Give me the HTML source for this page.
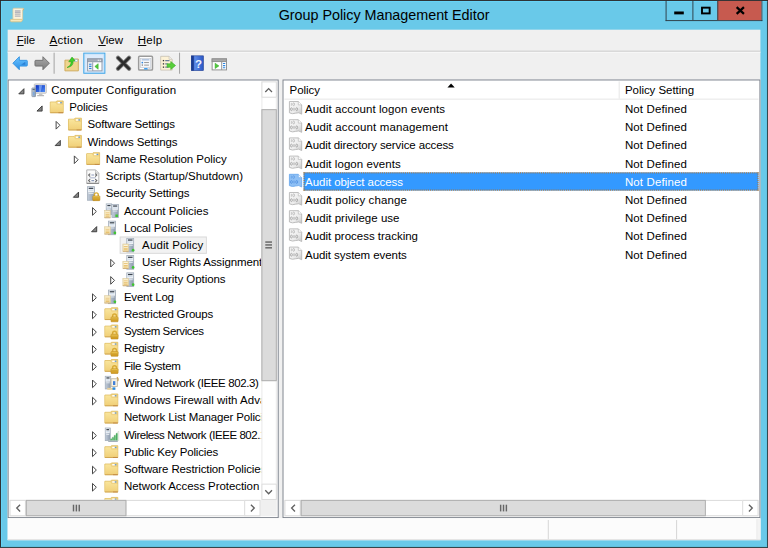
<!DOCTYPE html>
<html><head><meta charset="utf-8"><title>Group Policy Management Editor</title>
<style>
html,body{margin:0;padding:0;background:#6ac9e9;overflow:hidden;}
body{width:768px;height:548px;position:relative;font-family:"Liberation Sans", sans-serif;}
#w{position:absolute;left:0;top:0;width:802px;height:572px;transform-origin:0 0;transform:scale(0.9577,0.9577);}
.t{position:absolute;white-space:nowrap;line-height:16px;font-family:"Liberation Sans", sans-serif;}
svg{position:absolute;overflow:visible;}
u{text-decoration:underline;text-underline-offset:1px;}
</style></head><body><div id="w">
<svg width="0" height="0" style="position:absolute"><defs>
<linearGradient id="gf" x1="0" y1="0" x2="0" y2="1"><stop offset="0" stop-color="#f9e59c"/><stop offset="1" stop-color="#f1d079"/></linearGradient>
<linearGradient id="gt" x1="0" y1="0" x2="1" y2="0"><stop offset="0" stop-color="#c4cedb"/><stop offset="1" stop-color="#8d9bad"/></linearGradient>
<linearGradient id="gb" x1="0" y1="0" x2="1" y2="1"><stop offset="0" stop-color="#0a2fc0"/><stop offset="1" stop-color="#4f8df5"/></linearGradient>
<linearGradient id="gh" x1="0" y1="0" x2="1" y2="0"><stop offset="0" stop-color="#1d3f9c"/><stop offset="0.3" stop-color="#5c8ae8"/><stop offset="1" stop-color="#2a56c4"/></linearGradient>
<linearGradient id="gl" x1="0" y1="0" x2="0" y2="1"><stop offset="0" stop-color="#f3cf5c"/><stop offset="1" stop-color="#d29a1c"/></linearGradient>
<linearGradient id="gba" x1="0" y1="0" x2="0" y2="1"><stop offset="0" stop-color="#6cc4ff"/><stop offset="1" stop-color="#2b8fe6"/></linearGradient>
<linearGradient id="gga" x1="0" y1="0" x2="0" y2="1"><stop offset="0" stop-color="#a9a9a9"/><stop offset="1" stop-color="#7d7d7d"/></linearGradient>
<linearGradient id="gpol" x1="0" y1="0" x2="1" y2="1"><stop offset="0" stop-color="#fafafa"/><stop offset="0.6" stop-color="#ececec"/><stop offset="1" stop-color="#c4c4c4"/></linearGradient>
</defs></svg>
<div style="position:absolute;left:0px;top:0px;width:802px;height:572px;background:#69c9e9;box-sizing:border-box;border:1px solid #2b2625;"></div>
<div style="position:absolute;left:1px;top:1px;width:800px;height:570px;box-sizing:border-box;border:1px solid #66d4f8;border-right-color:#62c3e3;border-bottom-color:#62c3e3;"></div>
<svg style="left:10px;top:7.6px" width="16" height="16" viewBox="0 0 16 16"><path d="M3.500 1.500 Q3.500 0.600 4.600 0.600 H14 Q15.200 0.600 14.600 2 L13.600 3.200 V12.500 H3.500 Z" fill="#fbf3dc" stroke="#d9c9a0" stroke-width="0.800"/>
<path d="M5.500 3.300 H11.500 M5.500 5 H11.500 M5.500 6.700 H11.500 M5.500 8.800 H11.500" stroke="#b4b4bc" stroke-width="1.300"/>
<path d="M13.800 0.800 Q15.400 0.800 14.700 2.200 L13.700 3.400 Z" fill="#c9a468"/>
<path d="M0.800 13.300 Q0.800 12.200 2 12.200 H12.500 Q13.500 12.200 13.200 13.400 Q12.800 14.800 11.500 14.800 H2 Q0.800 14.800 0.800 13.300 Z" fill="#f7e7bb" stroke="#d9bf80" stroke-width="0.800"/></svg>
<div class="t" style="left:0px;top:8.00px;font-size:15px;color:#000;width:802px;text-align:center;letter-spacing:-0.03px;">Group Policy Management Editor</div>
<div style="position:absolute;left:695px;top:1px;width:101px;height:21px;box-sizing:border-box;border:1px solid #2f3e46;border-top:none;"></div>
<div style="position:absolute;left:723px;top:1px;width:1px;height:20px;background:#2f3e46;"></div>
<div style="position:absolute;left:749px;top:1px;width:46px;height:20px;background:#c75a4f;"></div>
<div style="position:absolute;left:749px;top:1px;width:1px;height:20px;background:#2f3e46;"></div>
<div style="position:absolute;left:704px;top:12px;width:10px;height:3px;background:#000;"></div>
<div style="position:absolute;left:732px;top:7px;width:10px;height:8px;box-sizing:border-box;border:2px solid #000;"></div>
<svg style="left:767.5px;top:7px" width="10" height="8" viewBox="0 0 10 8"><path d="M1.2 0.500 L8.800 7.500 M8.800 0.500 L1.200 7.500" stroke="#000" stroke-width="2.300"/></svg>
<div style="position:absolute;left:8px;top:31px;width:786px;height:533px;background:#f0f0f0;"></div>
<div class="t" style="left:17.368528766837212px;top:33.84px;font-size:12px;color:#000;letter-spacing:0.011px;"><u>F</u>ile</div>
<div class="t" style="left:51.72166649263861px;top:33.84px;font-size:12px;color:#000;letter-spacing:0.282px;"><u>A</u>ction</div>
<div class="t" style="left:102.57266367338416px;top:33.84px;font-size:12px;color:#000;letter-spacing:0.042px;"><u>V</u>iew</div>
<div class="t" style="left:143.9217291427378px;top:33.84px;font-size:12px;color:#000;letter-spacing:0.202px;"><u>H</u>elp</div>
<div style="position:absolute;left:8px;top:53px;width:786px;height:1px;background:#bcbcbc;"></div>
<div style="position:absolute;left:8px;top:54px;width:786px;height:1px;background:#fbfbfb;"></div>
<svg style="left:13px;top:58.1px" width="16" height="16" viewBox="0 0 16 16"><path d="M0.400 8 L7.200 1.200 V5 H14.700 Q15.500 5 15.500 5.800 V10.200 Q15.500 11 14.700 11 H7.200 V14.800 Z" fill="url(#gba)" stroke="#2f8fe0" stroke-width="0.9" stroke-linejoin="round"/>
<path d="M9 9.500 L13.500 6.500 V9.500 Z" fill="#1f6fc8" opacity=".7"/></svg>
<svg style="left:36px;top:58.1px" width="16" height="16" viewBox="0 0 16 16"><path d="M15.600 8 L8.800 1.200 V5 H1.300 Q0.500 5 0.500 5.800 V10.200 Q0.500 11 1.300 11 H8.800 V14.800 Z" fill="url(#gga)" stroke="#6a6a6a" stroke-width="0.9" stroke-linejoin="round"/></svg>
<div style="position:absolute;left:56px;top:55px;width:1px;height:22px;background:#a0a0a0;"></div>
<svg style="left:67.3px;top:58.6px" width="16" height="16" viewBox="0 0 16 16"><path d="M0.800 3.800 H6.500 L8 2.600 H14.800 V15 H0.800 Z" fill="#efd58f" stroke="#cda552" stroke-width="0.9"/>
<rect x="10.500" y="3.300" width="3.400" height="1.800" fill="#fff" stroke="#8aa8d8" stroke-width="0.5"/>
<path d="M3 11.500 Q7.500 9.500 7.200 5.200 L4.800 5.600 L8.200 0.600 L11.400 4.500 L9.300 4.800 Q10 10.500 3 11.500 Z" fill="#3fd02a" stroke="#27a318" stroke-width="0.6"/></svg>
<div style="position:absolute;left:87px;top:55px;width:23px;height:22px;box-sizing:border-box;border:1px solid #3da5e6;background:#dcebfc;box-shadow:inset 0 0 0 1px #bfe0fa;"></div>
<svg style="left:91px;top:58.5px" width="16" height="16" viewBox="0 0 16 16"><rect x="0.500" y="2.500" width="15" height="12.500" fill="#fff" stroke="#8e98a8" stroke-width="1"/>
<rect x="0.500" y="2.500" width="15" height="3" fill="#a7aeba" stroke="#8e98a8" stroke-width="1"/>
<rect x="11" y="3.300" width="1.500" height="1.300" fill="#e8eaee"/><rect x="13" y="3.300" width="1.500" height="1.300" fill="#e8eaee"/>
<rect x="1" y="6" width="4.500" height="8.500" fill="#e6e9ee"/><path d="M5.800 6 V15" stroke="#8e98a8" stroke-width="1"/>
<path d="M2 8 H4.500 M2 10.300 H4.500 M2 12.600 H4.500" stroke="#2f86e0" stroke-width="1.100"/>
<path d="M11.500 7.500 V13.300 L8 10.400 Z" fill="#4fc93a" stroke="#2fa21f" stroke-width="0.5"/></svg>
<svg style="left:121px;top:57.800000000000004px" width="16" height="16" viewBox="0 0 16 16"><path d="M2.200 2.200 L13.800 13.800 M13.800 2.200 L2.200 13.800" stroke="#7c7c7c" stroke-width="4.400" stroke-linecap="round"/>
<path d="M2.400 2.400 L13.600 13.600 M13.600 2.400 L2.400 13.600" stroke="#2d2d2d" stroke-width="2.700" stroke-linecap="round"/></svg>
<svg style="left:144px;top:57.6px" width="16" height="16" viewBox="0 0 16 16"><rect x="0.800" y="0.800" width="14.400" height="14.400" rx="1" fill="#fff" stroke="#9b9b9b" stroke-width="1.600"/>
<rect x="2.600" y="3" width="10.800" height="9.500" fill="#f6f8fb" stroke="#c2c8d2" stroke-width="0.700"/>
<path d="M4 4.500 H12" stroke="#9db4d6" stroke-width="1.200"/>
<circle cx="4.600" cy="7.300" r="0.900" fill="#2f86e0"/><circle cx="4.600" cy="10" r="0.800" fill="#8a8a8a"/>
<path d="M6.500 7.300 H11.500 M6.500 10 H11.500" stroke="#8a8a8a" stroke-width="0.900"/>
<rect x="6.500" y="13" width="3.600" height="1.600" fill="#3fa0f0"/><rect x="11" y="13" width="2.400" height="1.600" fill="#cfd4dc"/></svg>
<svg style="left:167px;top:57.6px" width="16" height="16" viewBox="0 0 16 16"><path d="M0.800 0.800 H9.500 L12.800 4 V15.200 H0.800 Z" fill="#fdf2d6" stroke="#c9c3b4" stroke-width="0.900"/>
<path d="M9.500 0.800 V4 H12.800" fill="#eee" stroke="#c9c3b4" stroke-width="0.700"/>
<g fill="#333"><rect x="3" y="4.600" width="1.400" height="1.400"/><rect x="3" y="8" width="1.400" height="1.400"/><rect x="3" y="11.400" width="1.400" height="1.400"/></g>
<path d="M5.500 5.300 H10 M5.500 8.700 H8 M5.500 12.100 H9" stroke="#6f7f9a" stroke-width="1.100"/>
<path d="M7.500 8.600 H11.300 V6.200 L16.300 10.400 L11.300 14.600 V12.200 H7.500 Z" fill="#58cf3a" stroke="#37a81f" stroke-width="0.600"/></svg>
<div style="position:absolute;left:187px;top:55px;width:1px;height:22px;background:#a0a0a0;"></div>
<svg style="left:198px;top:57.6px" width="16" height="16" viewBox="0 0 16 16"><rect x="1.800" y="0.300" width="12.600" height="15.400" fill="url(#gh)" stroke="#1b3a8e" stroke-width="0.600"/><rect x="1.800" y="0.300" width="2.600" height="15.400" fill="#17358a" opacity=".8"/><text x="9.200" y="12.600" font-family="Liberation Sans, sans-serif" font-weight="bold" font-size="12" fill="#eef3ff" text-anchor="middle">?</text></svg>
<svg style="left:221px;top:57.800000000000004px" width="16" height="16" viewBox="0 0 16 16"><rect x="0.500" y="3.500" width="15" height="11.500" fill="#fff" stroke="#8f8f8f" stroke-width="1"/>
<rect x="0.500" y="3.500" width="15" height="2.800" fill="#a9a9a9" stroke="#8f8f8f" stroke-width="1"/>
<path d="M10.500 6.500 V15" stroke="#8f8f8f" stroke-width="1"/>
<path d="M3.600 8 V13.600 L7.600 10.800 Z" fill="#4fc93a" stroke="#2fa21f" stroke-width="0.500"/>
<path d="M11.800 8.300 H14.200 M11.800 10.500 H14.200 M11.800 12.700 H14.200" stroke="#2f86e0" stroke-width="1.100"/></svg>
<div style="position:absolute;left:8px;top:83px;width:283px;height:458px;box-sizing:border-box;border:1px solid #787e88;background:#fff;"></div>
<div style="position:absolute;left:10px;top:85px;width:262.5px;height:437px;overflow:hidden;">
<svg style="left:8.7px;top:6.7px" width="7" height="7" viewBox="0 0 7 7"><path d="M6 0.600 V6 H0.600 Z" fill="#858585" stroke="#303030" stroke-width="0.9" stroke-linejoin="miter"/></svg>
<svg style="left:22.6px;top:1px" width="16" height="16" viewBox="0 0 16 16"><rect x="2.800" y="1.600" width="12.600" height="9.800" rx="0.800" fill="#e2e2e2" stroke="#b9b9b9" stroke-width="0.800"/>
<rect x="4.200" y="2.900" width="9.800" height="7.200" fill="url(#gb)"/>
<path d="M7.500 2.900 L11 2.900 L9.500 10.100 L8 10.100 Z" fill="#a9ccff" opacity=".55"/>
<path d="M8 11.600 H11 L11.500 13.300 H7.500 Z" fill="#c6c6c6"/><rect x="5.800" y="13.200" width="7.200" height="1.300" fill="#b8b8b8"/>
<rect x="0.300" y="5.900" width="3.800" height="9" rx="0.500" fill="url(#gt)" stroke="#8592a2" stroke-width="0.800"/>
<rect x="1" y="7" width="2.300" height="1" fill="#5a6775"/><rect x="1.300" y="10" width="1.700" height="3.800" fill="#6aa4e8" opacity=".7"/></svg>
<div class="t" style="left:43.4px;top:0.74px;font-size:12px;color:#000;letter-spacing:0.147px;">Computer Configuration</div>
<svg style="left:27.700000000000003px;top:24.7px" width="7" height="7" viewBox="0 0 7 7"><path d="M6 0.600 V6 H0.600 Z" fill="#858585" stroke="#303030" stroke-width="0.9" stroke-linejoin="miter"/></svg>
<svg style="left:41.6px;top:19px" width="16" height="16" viewBox="0 0 16 16"><path d="M0.500 2.500 H6.300 L7.300 1.400 H14 V13.600 H0.500 Z" fill="#efd283" stroke="#dfbe62" stroke-width="0.900"/>
<rect x="8.200" y="2.500" width="2.700" height="1.500" fill="#fff"/><rect x="10.900" y="2.600" width="1.600" height="1.300" fill="#5b9ae0"/>
<path d="M0.900 2.900 H5.900 L7.500 5.500 H13.600 V13.200 H0.900 Z" fill="url(#gf)"/>
<path d="M0.500 13.700 H14" stroke="#cfa24c" stroke-width="0.900"/>
<path d="M9 13.700 H14" stroke="#b9783a" stroke-width="0.900" opacity=".7"/></svg>
<div class="t" style="left:62.400000000000006px;top:18.74px;font-size:12px;color:#000;letter-spacing:-0.189px;">Policies</div>
<svg style="left:48.0px;top:41.2px" width="6" height="10" viewBox="0 0 6 10"><path d="M0.600 0.800 L4.600 4.800 L0.600 8.800 Z" fill="#fff" stroke="#404040" stroke-width="1"/></svg>
<svg style="left:60.599999999999994px;top:37px" width="16" height="16" viewBox="0 0 16 16"><path d="M0.500 2.500 H6.300 L7.300 1.400 H14 V13.600 H0.500 Z" fill="#efd283" stroke="#dfbe62" stroke-width="0.900"/>
<rect x="8.200" y="2.500" width="2.700" height="1.500" fill="#fff"/><rect x="10.900" y="2.600" width="1.600" height="1.300" fill="#5b9ae0"/>
<path d="M0.900 2.900 H5.900 L7.500 5.500 H13.600 V13.200 H0.900 Z" fill="url(#gf)"/>
<path d="M0.500 13.700 H14" stroke="#cfa24c" stroke-width="0.900"/>
<path d="M9 13.700 H14" stroke="#b9783a" stroke-width="0.900" opacity=".7"/></svg>
<div class="t" style="left:81.4px;top:36.74px;font-size:12px;color:#000;letter-spacing:-0.176px;">Software Settings</div>
<svg style="left:46.7px;top:60.7px" width="7" height="7" viewBox="0 0 7 7"><path d="M6 0.600 V6 H0.600 Z" fill="#858585" stroke="#303030" stroke-width="0.9" stroke-linejoin="miter"/></svg>
<svg style="left:60.599999999999994px;top:55px" width="16" height="16" viewBox="0 0 16 16"><path d="M0.500 2.500 H6.300 L7.300 1.400 H14 V13.600 H0.500 Z" fill="#efd283" stroke="#dfbe62" stroke-width="0.900"/>
<rect x="8.200" y="2.500" width="2.700" height="1.500" fill="#fff"/><rect x="10.900" y="2.600" width="1.600" height="1.300" fill="#5b9ae0"/>
<path d="M0.900 2.900 H5.900 L7.500 5.500 H13.600 V13.200 H0.900 Z" fill="url(#gf)"/>
<path d="M0.500 13.700 H14" stroke="#cfa24c" stroke-width="0.900"/>
<path d="M9 13.700 H14" stroke="#b9783a" stroke-width="0.900" opacity=".7"/></svg>
<div class="t" style="left:81.4px;top:54.74px;font-size:12px;color:#000;letter-spacing:-0.090px;">Windows Settings</div>
<svg style="left:67.0px;top:77.2px" width="6" height="10" viewBox="0 0 6 10"><path d="M0.600 0.800 L4.600 4.800 L0.600 8.800 Z" fill="#fff" stroke="#404040" stroke-width="1"/></svg>
<svg style="left:79.6px;top:73px" width="16" height="16" viewBox="0 0 16 16"><path d="M0.500 2.500 H6.300 L7.300 1.400 H14 V13.600 H0.500 Z" fill="#efd283" stroke="#dfbe62" stroke-width="0.900"/>
<rect x="8.200" y="2.500" width="2.700" height="1.500" fill="#fff"/><rect x="10.900" y="2.600" width="1.600" height="1.300" fill="#5b9ae0"/>
<path d="M0.900 2.900 H5.900 L7.500 5.500 H13.600 V13.200 H0.900 Z" fill="url(#gf)"/>
<path d="M0.500 13.700 H14" stroke="#cfa24c" stroke-width="0.900"/>
<path d="M9 13.700 H14" stroke="#b9783a" stroke-width="0.900" opacity=".7"/></svg>
<div class="t" style="left:100.4px;top:72.74px;font-size:12px;color:#000;letter-spacing:-0.047px;">Name Resolution Policy</div>
<svg style="left:79.6px;top:91px" width="16" height="16" viewBox="0 0 16 16"><path d="M0.600 1.400 H9.800 L13.200 4.800 V15.500 H0.600 Z" fill="#fbfbfb" stroke="#b0b0b0" stroke-width="1"/>
<path d="M0.600 15.500 H13.200" stroke="#8c8c8c" stroke-width="1.100"/>
<path d="M9.800 1.400 V4.800 H13.200" fill="#e6e6e6" stroke="#b0b0b0" stroke-width="0.800"/>
<path d="M4.200 5.300 L2.500 6.800 L4.200 8.300 M9.400 5.300 L11.100 6.800 L9.400 8.300 M4.200 11.100 L2.500 12.600 L4.200 14.100 M9.400 11.100 L11.100 12.600 L9.400 14.100" fill="none" stroke="#666" stroke-width="1.100"/>
<path d="M5.400 6.800 H8.300 M5.400 12.600 H8.300" stroke="#8e9aba" stroke-width="1.100"/>
<path d="M3.600 9.700 H10" stroke="#9aa4c0" stroke-width="0.900"/></svg>
<div class="t" style="left:100.4px;top:90.74px;font-size:12px;color:#000;letter-spacing:-0.003px;">Scripts (Startup/Shutdown)</div>
<svg style="left:65.7px;top:114.7px" width="7" height="7" viewBox="0 0 7 7"><path d="M6 0.600 V6 H0.600 Z" fill="#858585" stroke="#303030" stroke-width="0.9" stroke-linejoin="miter"/></svg>
<svg style="left:79.6px;top:109px" width="16" height="16" viewBox="0 0 16 16"><g transform="translate(1,0.5)"><rect x="0.4" y="0.4" width="7.2" height="14.2" fill="url(#gt)" stroke="#a3aebb" stroke-width="0.8"/>
<rect x="0.9" y="0.9" width="6.2" height="5.40" fill="#eef1f5"/>
<rect x="1.6" y="1.5" width="4.8" height="1.3" fill="#39434f"/>
<rect x="1.6" y="3.6" width="4.8" height="1.2" fill="#cfdcea"/>
<rect x="1.4" y="7.00" width="5.2" height="1.1" fill="#e4eaf1" opacity=".9"/></g><g transform="translate(6.6,6.8)"><path d="M2 4 V2.6 A2 2 0 0 1 6 2.600 V4" fill="none" stroke="#d9ab35" stroke-width="1.5"/>
<rect x="0.3" y="3.8" width="7.4" height="4.9" rx="0.6" fill="url(#gl)" stroke="#b9861a" stroke-width="0.6"/>
<path d="M1 5.6 H7 M1 7 H7" stroke="#b9861a" stroke-width="0.6" opacity=".7"/></g></svg>
<div class="t" style="left:100.4px;top:108.74px;font-size:12px;color:#000;letter-spacing:-0.167px;">Security Settings</div>
<svg style="left:86.0px;top:131.2px" width="6" height="10" viewBox="0 0 6 10"><path d="M0.600 0.800 L4.600 4.800 L0.600 8.800 Z" fill="#fff" stroke="#404040" stroke-width="1"/></svg>
<svg style="left:98.6px;top:127px" width="16" height="16" viewBox="0 0 16 16"><g transform="translate(1.5,0.5)"><rect x="0.4" y="0.4" width="5.7" height="11.2" fill="url(#gt)" stroke="#a3aebb" stroke-width="0.8"/>
<rect x="0.9" y="0.9" width="4.7" height="4.32" fill="#eef1f5"/>
<rect x="1.6" y="1.5" width="3.3" height="1.3" fill="#39434f"/>
<rect x="1.6" y="3.6" width="3.3" height="1.2" fill="#cfdcea"/>
<rect x="1.4" y="5.92" width="3.7" height="1.1" fill="#e4eaf1" opacity=".9"/></g><g transform="translate(7.5,1)"><rect x="0.4" y="0.4" width="6.7" height="13.7" fill="url(#gt)" stroke="#a3aebb" stroke-width="0.8"/>
<rect x="0.9" y="0.9" width="5.7" height="5.22" fill="#eef1f5"/>
<rect x="1.6" y="1.5" width="4.3" height="1.3" fill="#39434f"/>
<rect x="1.6" y="3.6" width="4.3" height="1.2" fill="#cfdcea"/>
<rect x="1.4" y="6.82" width="4.7" height="1.1" fill="#e4eaf1" opacity=".9"/></g><g transform="translate(0,7.5)"><rect x="0.3" y="0.3" width="6" height="7.6" fill="#f6e7b9" stroke="#d9c79a" stroke-width="0.6"/>
<path d="M1.3 1.900 H5.300 M1.300 3.700 H5.300" stroke="#fffdf3" stroke-width="0.9"/>
<path d="M1.300 2.800 H5.300 M1.300 4.700 H5.300 M1.300 6.300 H5.300" stroke="#e3b65c" stroke-width="0.8"/>
<path d="M0.300 7.900 H6.300" stroke="#c9a468" stroke-width="0.8"/></g><rect x="11.5" y="12" width="2.6" height="2.6" fill="#3fc431"/></svg>
<div class="t" style="left:119.4px;top:126.74px;font-size:12px;color:#000;letter-spacing:0.016px;">Account Policies</div>
<svg style="left:84.7px;top:150.7px" width="7" height="7" viewBox="0 0 7 7"><path d="M6 0.600 V6 H0.600 Z" fill="#858585" stroke="#303030" stroke-width="0.9" stroke-linejoin="miter"/></svg>
<svg style="left:98.6px;top:145px" width="16" height="16" viewBox="0 0 16 16"><g transform="translate(4,0.5)"><rect x="0.4" y="0.4" width="7.2" height="14.2" fill="url(#gt)" stroke="#a3aebb" stroke-width="0.8"/>
<rect x="0.9" y="0.9" width="6.2" height="5.40" fill="#eef1f5"/>
<rect x="1.6" y="1.5" width="4.8" height="1.3" fill="#39434f"/>
<rect x="1.6" y="3.6" width="4.8" height="1.2" fill="#cfdcea"/>
<rect x="1.4" y="7.00" width="5.2" height="1.1" fill="#e4eaf1" opacity=".9"/></g><g transform="translate(0,6.5)"><rect x="0.3" y="0.3" width="6" height="7.6" fill="#f6e7b9" stroke="#d9c79a" stroke-width="0.6"/>
<path d="M1.3 1.900 H5.300 M1.300 3.700 H5.300" stroke="#fffdf3" stroke-width="0.9"/>
<path d="M1.300 2.800 H5.300 M1.300 4.700 H5.300 M1.300 6.300 H5.300" stroke="#e3b65c" stroke-width="0.8"/>
<path d="M0.300 7.900 H6.300" stroke="#c9a468" stroke-width="0.8"/></g><circle cx="11" cy="13.2" r="1.4" fill="#3fc431"/></svg>
<div class="t" style="left:119.4px;top:144.74px;font-size:12px;color:#000;letter-spacing:-0.145px;">Local Policies</div>
<div style="position:absolute;left:115px;top:162px;width:91px;height:18px;box-sizing:border-box;border:1px solid #dadada;background:#f2f2f2;"></div>
<svg style="left:117.6px;top:163px" width="16" height="16" viewBox="0 0 16 16"><g transform="translate(4,0.5)"><rect x="0.4" y="0.4" width="7.2" height="14.2" fill="url(#gt)" stroke="#a3aebb" stroke-width="0.8"/>
<rect x="0.9" y="0.9" width="6.2" height="5.40" fill="#eef1f5"/>
<rect x="1.6" y="1.5" width="4.8" height="1.3" fill="#39434f"/>
<rect x="1.6" y="3.6" width="4.8" height="1.2" fill="#cfdcea"/>
<rect x="1.4" y="7.00" width="5.2" height="1.1" fill="#e4eaf1" opacity=".9"/></g><g transform="translate(0,6.5)"><rect x="0.3" y="0.3" width="6" height="7.6" fill="#f6e7b9" stroke="#d9c79a" stroke-width="0.6"/>
<path d="M1.3 1.900 H5.300 M1.300 3.700 H5.300" stroke="#fffdf3" stroke-width="0.9"/>
<path d="M1.300 2.800 H5.300 M1.300 4.700 H5.300 M1.300 6.300 H5.300" stroke="#e3b65c" stroke-width="0.8"/>
<path d="M0.300 7.900 H6.300" stroke="#c9a468" stroke-width="0.8"/></g><circle cx="11" cy="13.2" r="1.4" fill="#3fc431"/></svg>
<div class="t" style="left:138.4px;top:162.74px;font-size:12px;color:#000;letter-spacing:0.115px;">Audit Policy</div>
<svg style="left:105.0px;top:185.2px" width="6" height="10" viewBox="0 0 6 10"><path d="M0.600 0.800 L4.600 4.800 L0.600 8.800 Z" fill="#fff" stroke="#404040" stroke-width="1"/></svg>
<svg style="left:117.6px;top:181px" width="16" height="16" viewBox="0 0 16 16"><g transform="translate(4,0.5)"><rect x="0.4" y="0.4" width="7.2" height="14.2" fill="url(#gt)" stroke="#a3aebb" stroke-width="0.8"/>
<rect x="0.9" y="0.9" width="6.2" height="5.40" fill="#eef1f5"/>
<rect x="1.6" y="1.5" width="4.8" height="1.3" fill="#39434f"/>
<rect x="1.6" y="3.6" width="4.8" height="1.2" fill="#cfdcea"/>
<rect x="1.4" y="7.00" width="5.2" height="1.1" fill="#e4eaf1" opacity=".9"/></g><g transform="translate(0,6.5)"><rect x="0.3" y="0.3" width="6" height="7.6" fill="#f6e7b9" stroke="#d9c79a" stroke-width="0.6"/>
<path d="M1.3 1.900 H5.300 M1.300 3.700 H5.300" stroke="#fffdf3" stroke-width="0.9"/>
<path d="M1.300 2.800 H5.300 M1.300 4.700 H5.300 M1.300 6.300 H5.300" stroke="#e3b65c" stroke-width="0.8"/>
<path d="M0.300 7.900 H6.300" stroke="#c9a468" stroke-width="0.8"/></g><circle cx="11" cy="13.2" r="1.4" fill="#3fc431"/></svg>
<div class="t" style="left:138.4px;top:180.74px;font-size:12px;color:#000;letter-spacing:-0.131px;">User Rights Assignment</div>
<svg style="left:105.0px;top:203.2px" width="6" height="10" viewBox="0 0 6 10"><path d="M0.600 0.800 L4.600 4.800 L0.600 8.800 Z" fill="#fff" stroke="#404040" stroke-width="1"/></svg>
<svg style="left:117.6px;top:199px" width="16" height="16" viewBox="0 0 16 16"><g transform="translate(4,0.5)"><rect x="0.4" y="0.4" width="7.2" height="14.2" fill="url(#gt)" stroke="#a3aebb" stroke-width="0.8"/>
<rect x="0.9" y="0.9" width="6.2" height="5.40" fill="#eef1f5"/>
<rect x="1.6" y="1.5" width="4.8" height="1.3" fill="#39434f"/>
<rect x="1.6" y="3.6" width="4.8" height="1.2" fill="#cfdcea"/>
<rect x="1.4" y="7.00" width="5.2" height="1.1" fill="#e4eaf1" opacity=".9"/></g><g transform="translate(0,6.5)"><rect x="0.3" y="0.3" width="6" height="7.6" fill="#f6e7b9" stroke="#d9c79a" stroke-width="0.6"/>
<path d="M1.3 1.900 H5.300 M1.300 3.700 H5.300" stroke="#fffdf3" stroke-width="0.9"/>
<path d="M1.300 2.800 H5.300 M1.300 4.700 H5.300 M1.300 6.300 H5.300" stroke="#e3b65c" stroke-width="0.8"/>
<path d="M0.300 7.900 H6.300" stroke="#c9a468" stroke-width="0.8"/></g><circle cx="11" cy="13.2" r="1.4" fill="#3fc431"/></svg>
<div class="t" style="left:138.4px;top:198.74px;font-size:12px;color:#000;letter-spacing:-0.062px;">Security Options</div>
<svg style="left:86.0px;top:221.2px" width="6" height="10" viewBox="0 0 6 10"><path d="M0.600 0.800 L4.600 4.800 L0.600 8.800 Z" fill="#fff" stroke="#404040" stroke-width="1"/></svg>
<svg style="left:98.6px;top:217px" width="16" height="16" viewBox="0 0 16 16"><g transform="translate(4,0.5)"><rect x="0.4" y="0.4" width="7.2" height="14.2" fill="url(#gt)" stroke="#a3aebb" stroke-width="0.8"/>
<rect x="0.9" y="0.9" width="6.2" height="5.40" fill="#eef1f5"/>
<rect x="1.6" y="1.5" width="4.8" height="1.3" fill="#39434f"/>
<rect x="1.6" y="3.6" width="4.8" height="1.2" fill="#cfdcea"/>
<rect x="1.4" y="7.00" width="5.2" height="1.1" fill="#e4eaf1" opacity=".9"/></g><g transform="translate(0,6.5)"><rect x="0.3" y="0.3" width="6" height="7.6" fill="#f6e7b9" stroke="#d9c79a" stroke-width="0.6"/>
<path d="M1.3 1.900 H5.300 M1.300 3.700 H5.300" stroke="#fffdf3" stroke-width="0.9"/>
<path d="M1.300 2.800 H5.300 M1.300 4.700 H5.300 M1.300 6.300 H5.300" stroke="#e3b65c" stroke-width="0.8"/>
<path d="M0.300 7.900 H6.300" stroke="#c9a468" stroke-width="0.8"/></g><circle cx="11" cy="13.2" r="1.4" fill="#3fc431"/></svg>
<div class="t" style="left:119.4px;top:216.74px;font-size:12px;color:#000;letter-spacing:-0.225px;">Event Log</div>
<svg style="left:86.0px;top:239.2px" width="6" height="10" viewBox="0 0 6 10"><path d="M0.600 0.800 L4.600 4.800 L0.600 8.800 Z" fill="#fff" stroke="#404040" stroke-width="1"/></svg>
<svg style="left:98.6px;top:235px" width="16" height="16" viewBox="0 0 16 16"><path d="M0.500 2.500 H6.300 L7.300 1.400 H14 V13.600 H0.500 Z" fill="#efd283" stroke="#dfbe62" stroke-width="0.900"/>
<rect x="8.200" y="2.500" width="2.700" height="1.500" fill="#fff"/><rect x="10.900" y="2.600" width="1.600" height="1.300" fill="#5b9ae0"/>
<path d="M0.900 2.900 H5.900 L7.500 5.500 H13.600 V13.200 H0.900 Z" fill="url(#gf)"/>
<path d="M0.500 13.700 H14" stroke="#cfa24c" stroke-width="0.900"/>
<path d="M9 13.700 H14" stroke="#b9783a" stroke-width="0.900" opacity=".7"/></svg>
<svg style="left:98.6px;top:235px" width="16" height="16" viewBox="0 0 16 16"><g transform="translate(6.6,7.3)"><path d="M2 4 V2.6 A2 2 0 0 1 6 2.600 V4" fill="none" stroke="#d9ab35" stroke-width="1.5"/>
<rect x="0.3" y="3.8" width="7.4" height="4.9" rx="0.6" fill="url(#gl)" stroke="#b9861a" stroke-width="0.6"/>
<path d="M1 5.6 H7 M1 7 H7" stroke="#b9861a" stroke-width="0.6" opacity=".7"/></g></svg>
<div class="t" style="left:119.4px;top:234.74px;font-size:12px;color:#000;letter-spacing:-0.217px;">Restricted Groups</div>
<svg style="left:86.0px;top:257.2px" width="6" height="10" viewBox="0 0 6 10"><path d="M0.600 0.800 L4.600 4.800 L0.600 8.800 Z" fill="#fff" stroke="#404040" stroke-width="1"/></svg>
<svg style="left:98.6px;top:253px" width="16" height="16" viewBox="0 0 16 16"><path d="M0.500 2.500 H6.300 L7.300 1.400 H14 V13.600 H0.500 Z" fill="#efd283" stroke="#dfbe62" stroke-width="0.900"/>
<rect x="8.200" y="2.500" width="2.700" height="1.500" fill="#fff"/><rect x="10.900" y="2.600" width="1.600" height="1.300" fill="#5b9ae0"/>
<path d="M0.900 2.900 H5.900 L7.500 5.500 H13.600 V13.200 H0.900 Z" fill="url(#gf)"/>
<path d="M0.500 13.700 H14" stroke="#cfa24c" stroke-width="0.900"/>
<path d="M9 13.700 H14" stroke="#b9783a" stroke-width="0.900" opacity=".7"/></svg>
<svg style="left:98.6px;top:253px" width="16" height="16" viewBox="0 0 16 16"><g transform="translate(6.6,7.3)"><path d="M2 4 V2.6 A2 2 0 0 1 6 2.600 V4" fill="none" stroke="#d9ab35" stroke-width="1.5"/>
<rect x="0.3" y="3.8" width="7.4" height="4.9" rx="0.6" fill="url(#gl)" stroke="#b9861a" stroke-width="0.6"/>
<path d="M1 5.6 H7 M1 7 H7" stroke="#b9861a" stroke-width="0.6" opacity=".7"/></g></svg>
<div class="t" style="left:119.4px;top:252.74px;font-size:12px;color:#000;letter-spacing:-0.418px;">System Services</div>
<svg style="left:86.0px;top:275.2px" width="6" height="10" viewBox="0 0 6 10"><path d="M0.600 0.800 L4.600 4.800 L0.600 8.800 Z" fill="#fff" stroke="#404040" stroke-width="1"/></svg>
<svg style="left:98.6px;top:271px" width="16" height="16" viewBox="0 0 16 16"><path d="M0.500 2.500 H6.300 L7.300 1.400 H14 V13.600 H0.500 Z" fill="#efd283" stroke="#dfbe62" stroke-width="0.900"/>
<rect x="8.200" y="2.500" width="2.700" height="1.500" fill="#fff"/><rect x="10.900" y="2.600" width="1.600" height="1.300" fill="#5b9ae0"/>
<path d="M0.900 2.900 H5.900 L7.500 5.500 H13.600 V13.200 H0.900 Z" fill="url(#gf)"/>
<path d="M0.500 13.700 H14" stroke="#cfa24c" stroke-width="0.900"/>
<path d="M9 13.700 H14" stroke="#b9783a" stroke-width="0.900" opacity=".7"/></svg>
<svg style="left:98.6px;top:271px" width="16" height="16" viewBox="0 0 16 16"><g transform="translate(6.6,7.3)"><path d="M2 4 V2.6 A2 2 0 0 1 6 2.600 V4" fill="none" stroke="#d9ab35" stroke-width="1.5"/>
<rect x="0.3" y="3.8" width="7.4" height="4.9" rx="0.6" fill="url(#gl)" stroke="#b9861a" stroke-width="0.6"/>
<path d="M1 5.6 H7 M1 7 H7" stroke="#b9861a" stroke-width="0.6" opacity=".7"/></g></svg>
<div class="t" style="left:119.4px;top:270.74px;font-size:12px;color:#000;letter-spacing:-0.239px;">Registry</div>
<svg style="left:86.0px;top:293.2px" width="6" height="10" viewBox="0 0 6 10"><path d="M0.600 0.800 L4.600 4.800 L0.600 8.800 Z" fill="#fff" stroke="#404040" stroke-width="1"/></svg>
<svg style="left:98.6px;top:289px" width="16" height="16" viewBox="0 0 16 16"><path d="M0.500 2.500 H6.300 L7.300 1.400 H14 V13.600 H0.500 Z" fill="#efd283" stroke="#dfbe62" stroke-width="0.900"/>
<rect x="8.200" y="2.500" width="2.700" height="1.500" fill="#fff"/><rect x="10.900" y="2.600" width="1.600" height="1.300" fill="#5b9ae0"/>
<path d="M0.900 2.900 H5.900 L7.500 5.500 H13.600 V13.200 H0.900 Z" fill="url(#gf)"/>
<path d="M0.500 13.700 H14" stroke="#cfa24c" stroke-width="0.900"/>
<path d="M9 13.700 H14" stroke="#b9783a" stroke-width="0.900" opacity=".7"/></svg>
<svg style="left:98.6px;top:289px" width="16" height="16" viewBox="0 0 16 16"><g transform="translate(6.6,7.3)"><path d="M2 4 V2.6 A2 2 0 0 1 6 2.600 V4" fill="none" stroke="#d9ab35" stroke-width="1.5"/>
<rect x="0.3" y="3.8" width="7.4" height="4.9" rx="0.6" fill="url(#gl)" stroke="#b9861a" stroke-width="0.6"/>
<path d="M1 5.6 H7 M1 7 H7" stroke="#b9861a" stroke-width="0.6" opacity=".7"/></g></svg>
<div class="t" style="left:119.4px;top:288.74px;font-size:12px;color:#000;letter-spacing:-0.329px;">File System</div>
<svg style="left:86.0px;top:311.2px" width="6" height="10" viewBox="0 0 6 10"><path d="M0.600 0.800 L4.600 4.800 L0.600 8.800 Z" fill="#fff" stroke="#404040" stroke-width="1"/></svg>
<svg style="left:98.6px;top:307px" width="16" height="16" viewBox="0 0 16 16"><g transform="translate(0.5,0.5)"><rect x="0.4" y="0.4" width="5.7" height="13.2" fill="url(#gt)" stroke="#a3aebb" stroke-width="0.8"/>
<rect x="0.9" y="0.9" width="4.7" height="5.04" fill="#eef1f5"/>
<rect x="1.6" y="1.5" width="3.3" height="1.3" fill="#39434f"/>
<rect x="1.6" y="3.6" width="3.3" height="1.2" fill="#cfdcea"/>
<rect x="1.4" y="6.64" width="3.7" height="1.1" fill="#e4eaf1" opacity=".9"/></g><rect x="7" y="3.500" width="6.5" height="8" fill="#f6f1e2" stroke="#b9b09a" stroke-width="0.8"/>
<rect x="9" y="6" width="2.4" height="4" fill="#3f7fd8"/><path d="M13 2 Q15 3 14 6" stroke="#c49a4a" stroke-width="1.2" fill="none"/>
<rect x="3" y="13" width="8" height="2" fill="#e8cf9a"/><rect x="8.500" y="12.500" width="3" height="2.500" fill="#2a8be0"/></svg>
<div class="t" style="left:119.4px;top:306.74px;font-size:12px;color:#000;letter-spacing:-0.392px;">Wired Network (IEEE 802.3) Policies</div>
<svg style="left:86.0px;top:329.2px" width="6" height="10" viewBox="0 0 6 10"><path d="M0.600 0.800 L4.600 4.800 L0.600 8.800 Z" fill="#fff" stroke="#404040" stroke-width="1"/></svg>
<svg style="left:98.6px;top:325px" width="16" height="16" viewBox="0 0 16 16"><path d="M0.500 2.500 H6.300 L7.300 1.400 H14 V13.600 H0.500 Z" fill="#efd283" stroke="#dfbe62" stroke-width="0.900"/>
<rect x="8.200" y="2.500" width="2.700" height="1.500" fill="#fff"/><rect x="10.900" y="2.600" width="1.600" height="1.300" fill="#5b9ae0"/>
<path d="M0.900 2.900 H5.900 L7.500 5.500 H13.600 V13.200 H0.900 Z" fill="url(#gf)"/>
<path d="M0.500 13.700 H14" stroke="#cfa24c" stroke-width="0.900"/>
<path d="M9 13.700 H14" stroke="#b9783a" stroke-width="0.900" opacity=".7"/></svg>
<div class="t" style="left:119.4px;top:324.74px;font-size:12px;color:#000;letter-spacing:0.028px;">Windows Firewall with Advanced Security</div>
<svg style="left:98.6px;top:343px" width="16" height="16" viewBox="0 0 16 16"><path d="M0.500 2.500 H6.300 L7.300 1.400 H14 V13.600 H0.500 Z" fill="#efd283" stroke="#dfbe62" stroke-width="0.900"/>
<rect x="8.200" y="2.500" width="2.700" height="1.500" fill="#fff"/><rect x="10.900" y="2.600" width="1.600" height="1.300" fill="#5b9ae0"/>
<path d="M0.900 2.900 H5.900 L7.500 5.500 H13.600 V13.200 H0.900 Z" fill="url(#gf)"/>
<path d="M0.500 13.700 H14" stroke="#cfa24c" stroke-width="0.900"/>
<path d="M9 13.700 H14" stroke="#b9783a" stroke-width="0.900" opacity=".7"/></svg>
<div class="t" style="left:119.4px;top:342.74px;font-size:12px;color:#000;letter-spacing:-0.133px;">Network List Manager Policies</div>
<svg style="left:86.0px;top:365.2px" width="6" height="10" viewBox="0 0 6 10"><path d="M0.600 0.800 L4.600 4.800 L0.600 8.800 Z" fill="#fff" stroke="#404040" stroke-width="1"/></svg>
<svg style="left:98.6px;top:361px" width="16" height="16" viewBox="0 0 16 16"><g transform="translate(0.5,0.5)"><rect x="0.4" y="0.4" width="5.2" height="13.2" fill="url(#gt)" stroke="#a3aebb" stroke-width="0.8"/>
<rect x="0.9" y="0.9" width="4.2" height="5.04" fill="#eef1f5"/>
<rect x="1.6" y="1.5" width="2.8" height="1.3" fill="#39434f"/>
<rect x="1.6" y="3.6" width="2.8" height="1.2" fill="#cfdcea"/>
<rect x="1.4" y="6.64" width="3.2" height="1.1" fill="#e4eaf1" opacity=".9"/></g><path d="M5 14 L15 4 V14 Z" fill="#eef6ea" stroke="#c4cfc0" stroke-width="0.5"/>
<path d="M7 14 V12 M9 14 V10.500 M11 14 V8.500 M13 14 V6.500" stroke="#1f9a3c" stroke-width="1.3"/>
<rect x="4" y="14.200" width="10" height="1.2" fill="#9aa6b3"/></svg>
<div class="t" style="left:119.4px;top:360.74px;font-size:12px;color:#000;letter-spacing:-0.468px;">Wireless Network (IEEE 802.11) Policies</div>
<svg style="left:86.0px;top:383.2px" width="6" height="10" viewBox="0 0 6 10"><path d="M0.600 0.800 L4.600 4.800 L0.600 8.800 Z" fill="#fff" stroke="#404040" stroke-width="1"/></svg>
<svg style="left:98.6px;top:379px" width="16" height="16" viewBox="0 0 16 16"><path d="M0.500 2.500 H6.300 L7.300 1.400 H14 V13.600 H0.500 Z" fill="#efd283" stroke="#dfbe62" stroke-width="0.900"/>
<rect x="8.200" y="2.500" width="2.700" height="1.500" fill="#fff"/><rect x="10.900" y="2.600" width="1.600" height="1.300" fill="#5b9ae0"/>
<path d="M0.900 2.900 H5.900 L7.500 5.500 H13.600 V13.200 H0.900 Z" fill="url(#gf)"/>
<path d="M0.500 13.700 H14" stroke="#cfa24c" stroke-width="0.900"/>
<path d="M9 13.700 H14" stroke="#b9783a" stroke-width="0.900" opacity=".7"/></svg>
<div class="t" style="left:119.4px;top:378.74px;font-size:12px;color:#000;letter-spacing:-0.166px;">Public Key Policies</div>
<svg style="left:86.0px;top:401.2px" width="6" height="10" viewBox="0 0 6 10"><path d="M0.600 0.800 L4.600 4.800 L0.600 8.800 Z" fill="#fff" stroke="#404040" stroke-width="1"/></svg>
<svg style="left:98.6px;top:397px" width="16" height="16" viewBox="0 0 16 16"><path d="M0.500 2.500 H6.300 L7.300 1.400 H14 V13.600 H0.500 Z" fill="#efd283" stroke="#dfbe62" stroke-width="0.900"/>
<rect x="8.200" y="2.500" width="2.700" height="1.500" fill="#fff"/><rect x="10.900" y="2.600" width="1.600" height="1.300" fill="#5b9ae0"/>
<path d="M0.900 2.900 H5.900 L7.500 5.500 H13.600 V13.200 H0.900 Z" fill="url(#gf)"/>
<path d="M0.500 13.700 H14" stroke="#cfa24c" stroke-width="0.900"/>
<path d="M9 13.700 H14" stroke="#b9783a" stroke-width="0.900" opacity=".7"/></svg>
<div class="t" style="left:119.4px;top:396.74px;font-size:12px;color:#000;letter-spacing:-0.123px;">Software Restriction Policies</div>
<svg style="left:86.0px;top:419.2px" width="6" height="10" viewBox="0 0 6 10"><path d="M0.600 0.800 L4.600 4.800 L0.600 8.800 Z" fill="#fff" stroke="#404040" stroke-width="1"/></svg>
<svg style="left:98.6px;top:415px" width="16" height="16" viewBox="0 0 16 16"><path d="M0.500 2.500 H6.300 L7.300 1.400 H14 V13.600 H0.500 Z" fill="#efd283" stroke="#dfbe62" stroke-width="0.900"/>
<rect x="8.200" y="2.500" width="2.700" height="1.500" fill="#fff"/><rect x="10.900" y="2.600" width="1.600" height="1.300" fill="#5b9ae0"/>
<path d="M0.900 2.900 H5.900 L7.500 5.500 H13.600 V13.200 H0.900 Z" fill="url(#gf)"/>
<path d="M0.500 13.700 H14" stroke="#cfa24c" stroke-width="0.900"/>
<path d="M9 13.700 H14" stroke="#b9783a" stroke-width="0.900" opacity=".7"/></svg>
<div class="t" style="left:119.4px;top:414.74px;font-size:12px;color:#000;letter-spacing:-0.057px;">Network Access Protection</div>
<svg style="left:86.0px;top:437.2px" width="6" height="10" viewBox="0 0 6 10"><path d="M0.600 0.800 L4.600 4.800 L0.600 8.800 Z" fill="#fff" stroke="#404040" stroke-width="1"/></svg>
<svg style="left:98.6px;top:433px" width="16" height="16" viewBox="0 0 16 16"><path d="M0.500 2.500 H6.300 L7.300 1.400 H14 V13.600 H0.500 Z" fill="#efd283" stroke="#dfbe62" stroke-width="0.900"/>
<rect x="8.200" y="2.500" width="2.700" height="1.500" fill="#fff"/><rect x="10.900" y="2.600" width="1.600" height="1.300" fill="#5b9ae0"/>
<path d="M0.900 2.900 H5.900 L7.500 5.500 H13.600 V13.200 H0.900 Z" fill="url(#gf)"/>
<path d="M0.500 13.700 H14" stroke="#cfa24c" stroke-width="0.900"/>
<path d="M9 13.700 H14" stroke="#b9783a" stroke-width="0.900" opacity=".7"/></svg>
<div class="t" style="left:119.4px;top:432.74px;font-size:12px;color:#000;letter-spacing:-0.400px;">Application Control Policies</div>
</div>
<div style="position:absolute;left:272.5px;top:85px;width:16.7px;height:437px;background:#fff;box-sizing:border-box;border-left:1px solid #e8e8e8;border-right:1px solid #e8e8e8;"></div>
<div style="position:absolute;left:272.5px;top:85px;width:16.7px;height:17px;background:#fff;box-sizing:border-box;border:1px solid #dadada;"></div>
<svg style="left:276.35px;top:91px" width="9" height="6" viewBox="0 0 9 6"><path d="M1 5 L4.500 1.500 L8 5" fill="none" stroke="#606060" stroke-width="1.400"/></svg>
<div style="position:absolute;left:272.5px;top:114px;width:16.7px;height:284px;background:#dbdbdb;box-sizing:border-box;border:1px solid #aeaeae;"></div>
<svg style="left:277.35px;top:252.25px" width="7" height="1.5" viewBox="0 0 7 1.5"><rect width="7" height="1.5" fill="#666"/></svg>
<svg style="left:277.35px;top:255.25px" width="7" height="1.5" viewBox="0 0 7 1.5"><rect width="7" height="1.5" fill="#666"/></svg>
<svg style="left:277.35px;top:258.25px" width="7" height="1.5" viewBox="0 0 7 1.5"><rect width="7" height="1.5" fill="#666"/></svg>
<div style="position:absolute;left:272.5px;top:505px;width:16.7px;height:17px;background:#fff;box-sizing:border-box;border:1px solid #dadada;"></div>
<svg style="left:276.35px;top:511px" width="9" height="6" viewBox="0 0 9 6"><path d="M1 1 L4.500 4.500 L8 1" fill="none" stroke="#606060" stroke-width="1.400"/></svg>
<div style="position:absolute;left:10px;top:522px;width:279px;height:17px;background:#f0f0f0;"></div>
<div style="position:absolute;left:10px;top:522px;width:262px;height:17px;background:#fff;box-sizing:border-box;border:1px solid #dadada;"></div>
<div style="position:absolute;left:10px;top:522px;width:17px;height:17px;background:#fff;box-sizing:border-box;border:1px solid #dadada;"></div>
<svg style="left:15.5px;top:526px" width="6" height="9" viewBox="0 0 6 9"><path d="M5 1 L1.500 4.500 L5 8" fill="none" stroke="#606060" stroke-width="1.400"/></svg>
<div style="position:absolute;left:27px;top:522px;width:105px;height:17px;background:#dbdbdb;box-sizing:border-box;border:1px solid #aeaeae;"></div>
<svg style="left:75.75px;top:527.0px" width="1.5" height="7" viewBox="0 0 1.5 7"><rect width="1.5" height="7" fill="#666"/></svg>
<svg style="left:78.75px;top:527.0px" width="1.5" height="7" viewBox="0 0 1.5 7"><rect width="1.5" height="7" fill="#666"/></svg>
<svg style="left:81.75px;top:527.0px" width="1.5" height="7" viewBox="0 0 1.5 7"><rect width="1.5" height="7" fill="#666"/></svg>
<div style="position:absolute;left:255px;top:522px;width:17px;height:17px;background:#fff;box-sizing:border-box;border:1px solid #dadada;"></div>
<svg style="left:260.5px;top:526px" width="6" height="9" viewBox="0 0 6 9"><path d="M1 1 L4.500 4.500 L1 8" fill="none" stroke="#606060" stroke-width="1.400"/></svg>
<div style="position:absolute;left:295px;top:83px;width:499px;height:458px;box-sizing:border-box;border:1px solid #787e88;background:#fff;"></div>
<div style="position:absolute;left:297px;top:85px;width:495px;height:19px;background:#fff;box-sizing:border-box;border-bottom:1px solid #e5e5e5;"></div>
<div style="position:absolute;left:646px;top:85px;width:1px;height:18px;background:#e5e5e5;"></div>
<div class="t" style="left:302.3px;top:86.44px;font-size:12px;color:#000;letter-spacing:-0.030px;">Policy</div>
<div class="t" style="left:652.5px;top:86.44px;font-size:12px;color:#000;letter-spacing:-0.039px;">Policy Setting</div>
<svg style="left:467px;top:87.1px" width="8" height="4.5" viewBox="0 0 8 4.5"><path d="M0.200 4.400 L4 0.200 L7.800 4.400 Z" fill="#000"/></svg>
<svg style="left:301px;top:105.3px" width="16" height="16" viewBox="0 0 16 16"><path d="M1.200 1 H10.500 L14 4.500 V14.200 Q11 11.800 7.600 13.200 Q4.400 14.400 1.200 12.800 Z" fill="url(#gpol)" stroke="#b4b4b4" stroke-width="0.9"/>
<path d="M10.500 1 V4.500 H14" fill="#fff" stroke="#b4b4b4" stroke-width="0.7" opacity=".9"/>
<g fill="none" stroke="#9a9a9a" stroke-width="0.8"><path d="M3.200 2.400 V5.400" opacity=".7"/><ellipse cx="5.600" cy="3.900" rx="0.950" ry="1.450" opacity=".7"/>
<ellipse cx="3.300" cy="9" rx="0.950" ry="1.500"/><path d="M6 7.500 V10.500"/><ellipse cx="8.800" cy="9" rx="1" ry="1.500"/></g></svg>
<div class="t" style="left:318.6px;top:105.94px;font-size:12px;color:#000;letter-spacing:0.075px;">Audit account logon events</div>
<div class="t" style="left:652.5px;top:105.94px;font-size:12px;color:#000;letter-spacing:0.134px;">Not Defined</div>
<svg style="left:301px;top:124.3px" width="16" height="16" viewBox="0 0 16 16"><path d="M1.200 1 H10.500 L14 4.500 V14.200 Q11 11.800 7.600 13.200 Q4.400 14.400 1.200 12.800 Z" fill="url(#gpol)" stroke="#b4b4b4" stroke-width="0.9"/>
<path d="M10.500 1 V4.500 H14" fill="#fff" stroke="#b4b4b4" stroke-width="0.7" opacity=".9"/>
<g fill="none" stroke="#9a9a9a" stroke-width="0.8"><path d="M3.200 2.400 V5.400" opacity=".7"/><ellipse cx="5.600" cy="3.900" rx="0.950" ry="1.450" opacity=".7"/>
<ellipse cx="3.300" cy="9" rx="0.950" ry="1.500"/><path d="M6 7.500 V10.500"/><ellipse cx="8.800" cy="9" rx="1" ry="1.500"/></g></svg>
<div class="t" style="left:318.6px;top:124.94px;font-size:12px;color:#000;letter-spacing:0.129px;">Audit account management</div>
<div class="t" style="left:652.5px;top:124.94px;font-size:12px;color:#000;letter-spacing:0.134px;">Not Defined</div>
<svg style="left:301px;top:143.3px" width="16" height="16" viewBox="0 0 16 16"><path d="M1.200 1 H10.500 L14 4.500 V14.200 Q11 11.800 7.600 13.200 Q4.400 14.400 1.200 12.800 Z" fill="url(#gpol)" stroke="#b4b4b4" stroke-width="0.9"/>
<path d="M10.500 1 V4.500 H14" fill="#fff" stroke="#b4b4b4" stroke-width="0.7" opacity=".9"/>
<g fill="none" stroke="#9a9a9a" stroke-width="0.8"><path d="M3.200 2.400 V5.400" opacity=".7"/><ellipse cx="5.600" cy="3.900" rx="0.950" ry="1.450" opacity=".7"/>
<ellipse cx="3.300" cy="9" rx="0.950" ry="1.500"/><path d="M6 7.500 V10.500"/><ellipse cx="8.800" cy="9" rx="1" ry="1.500"/></g></svg>
<div class="t" style="left:318.6px;top:143.94px;font-size:12px;color:#000;letter-spacing:-0.118px;">Audit directory service access</div>
<div class="t" style="left:652.5px;top:143.94px;font-size:12px;color:#000;letter-spacing:0.134px;">Not Defined</div>
<svg style="left:301px;top:162.3px" width="16" height="16" viewBox="0 0 16 16"><path d="M1.200 1 H10.500 L14 4.500 V14.200 Q11 11.800 7.600 13.200 Q4.400 14.400 1.200 12.800 Z" fill="url(#gpol)" stroke="#b4b4b4" stroke-width="0.9"/>
<path d="M10.500 1 V4.500 H14" fill="#fff" stroke="#b4b4b4" stroke-width="0.7" opacity=".9"/>
<g fill="none" stroke="#9a9a9a" stroke-width="0.8"><path d="M3.200 2.400 V5.400" opacity=".7"/><ellipse cx="5.600" cy="3.900" rx="0.950" ry="1.450" opacity=".7"/>
<ellipse cx="3.300" cy="9" rx="0.950" ry="1.500"/><path d="M6 7.500 V10.500"/><ellipse cx="8.800" cy="9" rx="1" ry="1.500"/></g></svg>
<div class="t" style="left:318.6px;top:162.94px;font-size:12px;color:#000;letter-spacing:0.061px;">Audit logon events</div>
<div class="t" style="left:652.5px;top:162.94px;font-size:12px;color:#000;letter-spacing:0.134px;">Not Defined</div>
<div style="position:absolute;left:316.5px;top:180px;width:475.5px;height:19px;background:#3399ff;box-sizing:border-box;border:1px dotted #c86a00;"></div>
<svg style="left:301px;top:181.3px" width="16" height="16" viewBox="0 0 16 16"><path d="M1.200 1 H10.500 L14 4.500 V14.200 Q11 11.800 7.600 13.200 Q4.400 14.400 1.200 12.800 Z" fill="#8fc0f5" stroke="#6aa8ec" stroke-width="0.9"/>
<path d="M10.500 1 V4.500 H14" fill="#fff" stroke="#6aa8ec" stroke-width="0.7" opacity=".9"/>
<g fill="none" stroke="#4f8fe0" stroke-width="0.8"><path d="M3.200 2.400 V5.400" opacity=".7"/><ellipse cx="5.600" cy="3.900" rx="0.950" ry="1.450" opacity=".7"/>
<ellipse cx="3.300" cy="9" rx="0.950" ry="1.500"/><path d="M6 7.500 V10.500"/><ellipse cx="8.800" cy="9" rx="1" ry="1.500"/></g></svg>
<div class="t" style="left:318.6px;top:181.94px;font-size:12px;color:#fff;letter-spacing:-0.063px;">Audit object access</div>
<div class="t" style="left:652.5px;top:181.94px;font-size:12px;color:#fff;letter-spacing:0.134px;">Not Defined</div>
<svg style="left:301px;top:200.3px" width="16" height="16" viewBox="0 0 16 16"><path d="M1.200 1 H10.500 L14 4.500 V14.200 Q11 11.800 7.600 13.200 Q4.400 14.400 1.200 12.800 Z" fill="url(#gpol)" stroke="#b4b4b4" stroke-width="0.9"/>
<path d="M10.500 1 V4.500 H14" fill="#fff" stroke="#b4b4b4" stroke-width="0.7" opacity=".9"/>
<g fill="none" stroke="#9a9a9a" stroke-width="0.8"><path d="M3.200 2.400 V5.400" opacity=".7"/><ellipse cx="5.600" cy="3.900" rx="0.950" ry="1.450" opacity=".7"/>
<ellipse cx="3.300" cy="9" rx="0.950" ry="1.500"/><path d="M6 7.500 V10.500"/><ellipse cx="8.800" cy="9" rx="1" ry="1.500"/></g></svg>
<div class="t" style="left:318.6px;top:200.94px;font-size:12px;color:#000;letter-spacing:0.121px;">Audit policy change</div>
<div class="t" style="left:652.5px;top:200.94px;font-size:12px;color:#000;letter-spacing:0.134px;">Not Defined</div>
<svg style="left:301px;top:219.3px" width="16" height="16" viewBox="0 0 16 16"><path d="M1.200 1 H10.500 L14 4.500 V14.200 Q11 11.800 7.600 13.200 Q4.400 14.400 1.200 12.800 Z" fill="url(#gpol)" stroke="#b4b4b4" stroke-width="0.9"/>
<path d="M10.500 1 V4.500 H14" fill="#fff" stroke="#b4b4b4" stroke-width="0.7" opacity=".9"/>
<g fill="none" stroke="#9a9a9a" stroke-width="0.8"><path d="M3.200 2.400 V5.400" opacity=".7"/><ellipse cx="5.600" cy="3.900" rx="0.950" ry="1.450" opacity=".7"/>
<ellipse cx="3.300" cy="9" rx="0.950" ry="1.500"/><path d="M6 7.500 V10.500"/><ellipse cx="8.800" cy="9" rx="1" ry="1.500"/></g></svg>
<div class="t" style="left:318.6px;top:219.94px;font-size:12px;color:#000;letter-spacing:0.025px;">Audit privilege use</div>
<div class="t" style="left:652.5px;top:219.94px;font-size:12px;color:#000;letter-spacing:0.134px;">Not Defined</div>
<svg style="left:301px;top:238.3px" width="16" height="16" viewBox="0 0 16 16"><path d="M1.200 1 H10.500 L14 4.500 V14.200 Q11 11.800 7.600 13.200 Q4.400 14.400 1.200 12.800 Z" fill="url(#gpol)" stroke="#b4b4b4" stroke-width="0.9"/>
<path d="M10.500 1 V4.500 H14" fill="#fff" stroke="#b4b4b4" stroke-width="0.7" opacity=".9"/>
<g fill="none" stroke="#9a9a9a" stroke-width="0.8"><path d="M3.200 2.400 V5.400" opacity=".7"/><ellipse cx="5.600" cy="3.900" rx="0.950" ry="1.450" opacity=".7"/>
<ellipse cx="3.300" cy="9" rx="0.950" ry="1.500"/><path d="M6 7.500 V10.500"/><ellipse cx="8.800" cy="9" rx="1" ry="1.500"/></g></svg>
<div class="t" style="left:318.6px;top:238.94px;font-size:12px;color:#000;letter-spacing:-0.009px;">Audit process tracking</div>
<div class="t" style="left:652.5px;top:238.94px;font-size:12px;color:#000;letter-spacing:0.134px;">Not Defined</div>
<svg style="left:301px;top:257.3px" width="16" height="16" viewBox="0 0 16 16"><path d="M1.200 1 H10.500 L14 4.500 V14.200 Q11 11.800 7.600 13.200 Q4.400 14.400 1.200 12.800 Z" fill="url(#gpol)" stroke="#b4b4b4" stroke-width="0.9"/>
<path d="M10.500 1 V4.500 H14" fill="#fff" stroke="#b4b4b4" stroke-width="0.7" opacity=".9"/>
<g fill="none" stroke="#9a9a9a" stroke-width="0.8"><path d="M3.200 2.400 V5.400" opacity=".7"/><ellipse cx="5.600" cy="3.900" rx="0.950" ry="1.450" opacity=".7"/>
<ellipse cx="3.300" cy="9" rx="0.950" ry="1.500"/><path d="M6 7.500 V10.500"/><ellipse cx="8.800" cy="9" rx="1" ry="1.500"/></g></svg>
<div class="t" style="left:318.6px;top:257.94px;font-size:12px;color:#000;letter-spacing:-0.067px;">Audit system events</div>
<div class="t" style="left:652.5px;top:257.94px;font-size:12px;color:#000;letter-spacing:0.134px;">Not Defined</div>
<div style="position:absolute;left:297px;top:522px;width:495px;height:17px;background:#fff;box-sizing:border-box;border:1px solid #dadada;"></div>
<div style="position:absolute;left:297px;top:522px;width:17px;height:17px;background:#fff;box-sizing:border-box;border:1px solid #dadada;"></div>
<svg style="left:302.5px;top:526px" width="6" height="9" viewBox="0 0 6 9"><path d="M5 1 L1.500 4.500 L5 8" fill="none" stroke="#606060" stroke-width="1.400"/></svg>
<div style="position:absolute;left:314px;top:522px;width:423px;height:17px;background:#dbdbdb;box-sizing:border-box;border:1px solid #aeaeae;"></div>
<svg style="left:521.75px;top:527.0px" width="1.5" height="7" viewBox="0 0 1.5 7"><rect width="1.5" height="7" fill="#666"/></svg>
<svg style="left:524.75px;top:527.0px" width="1.5" height="7" viewBox="0 0 1.5 7"><rect width="1.5" height="7" fill="#666"/></svg>
<svg style="left:527.75px;top:527.0px" width="1.5" height="7" viewBox="0 0 1.5 7"><rect width="1.5" height="7" fill="#666"/></svg>
<div style="position:absolute;left:775px;top:522px;width:17px;height:17px;background:#fff;box-sizing:border-box;border:1px solid #dadada;"></div>
<svg style="left:780.5px;top:526px" width="6" height="9" viewBox="0 0 6 9"><path d="M1 1 L4.500 4.500 L1 8" fill="none" stroke="#606060" stroke-width="1.400"/></svg>
<div style="position:absolute;left:8px;top:541px;width:786px;height:23px;background:#fcfcfc;box-sizing:border-box;border-bottom:1px solid #e0e0e0;"></div>
<div style="position:absolute;left:572px;top:543px;width:1px;height:20px;background:#d4d4d4;"></div>
<div style="position:absolute;left:706px;top:543px;width:1px;height:20px;background:#d4d4d4;"></div>
<div style="position:absolute;left:790px;top:542px;width:1px;height:21px;background:#e2e2e2;"></div>
<div style="position:absolute;left:791px;top:542px;width:3px;height:21px;background:#f3f3f3;"></div>
</div></body></html>
